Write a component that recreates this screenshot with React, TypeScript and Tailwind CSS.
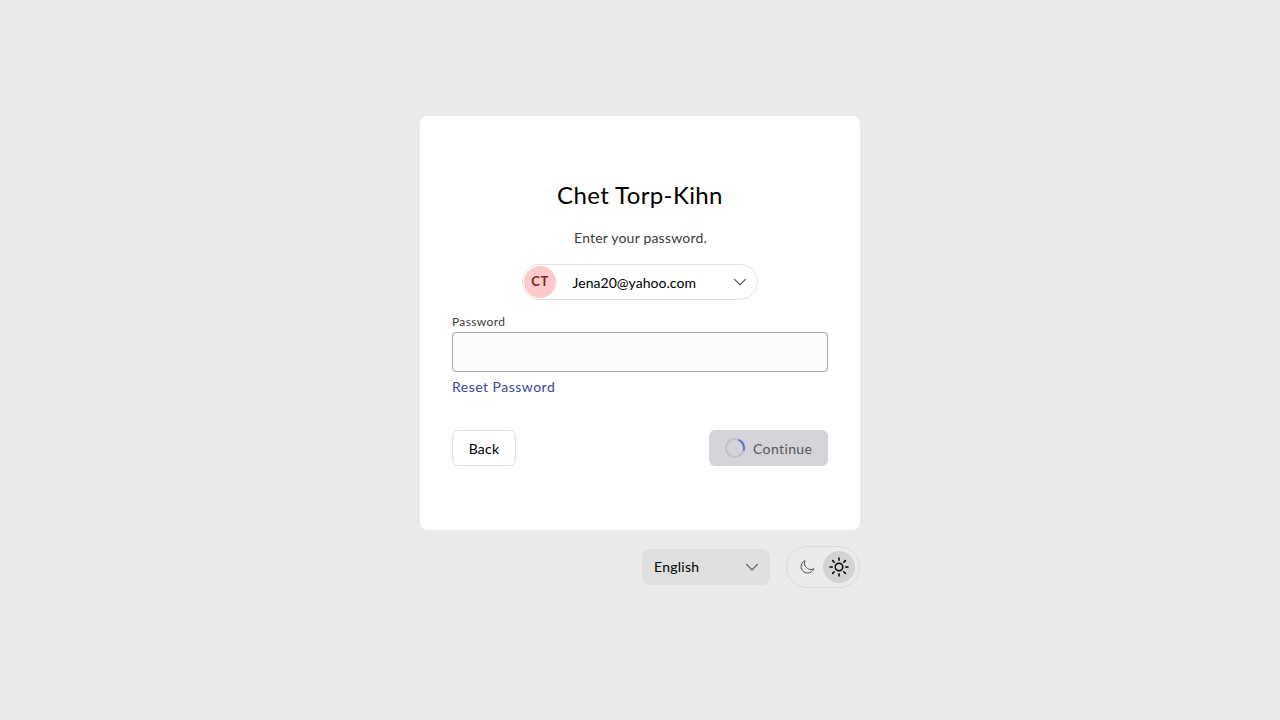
function Spinner() {
  return (
    <svg className="size-5" viewBox="0 0 20 20" fill="none" strokeWidth="2">
      <circle cx="10" cy="10" r="9" stroke="#c0c0c4" />
      <path d="M13.6 1.75A9 9 0 0 1 18.6 12.6" stroke="#5b6fd6" />
    </svg>
  );
}

function ChevronDown() {
  return (
    <svg
      className="size-4 text-[#505050]"
      viewBox="0 0 24 24"
      fill="none"
      stroke="currentColor"
      strokeWidth="1.75"
      strokeLinecap="round"
      strokeLinejoin="round"
    >
      <path d="m20.1 8.1-8.1 8.1-8.1-8.1" />
    </svg>
  );
}

function MoonIcon() {
  return (
    <svg
      className="size-4 text-[#505050]"
      viewBox="0 0 24 24"
      fill="none"
      stroke="currentColor"
      strokeWidth="1.5"
      strokeLinecap="round"
      strokeLinejoin="round"
    >
      <path d="M21.752 15.002A9.72 9.72 0 0 1 18 15.75c-5.385 0-9.75-4.365-9.75-9.75 0-1.33.266-2.597.748-3.752A9.753 9.753 0 0 0 3 11.25C3 16.635 7.365 21 12.75 21a9.753 9.753 0 0 0 9.002-5.998Z" />
    </svg>
  );
}

function SunIcon() {
  return (
    <svg className="size-6 text-black" viewBox="0 0 24 24" fill="none" stroke="currentColor" strokeWidth="1.5" strokeLinecap="round">
      <circle cx="12" cy="12" r="3.75" />
      <path d="M12 3v2.25M12 18.75V21M3 12h2.25M18.75 12H21M5.64 5.64l1.59 1.59M16.77 16.77l1.59 1.59M5.64 18.36l1.59-1.59M16.77 7.23l1.59-1.59" />
    </svg>
  );
}

function AccountPicker() {
  return (
    <button className="mt-4 flex h-9 w-[236px] items-center self-center rounded-full border border-[#e1e1e1] pl-px pr-[9px]">
      <span className="flex size-8 items-center justify-center rounded-full bg-[#fecaca] pb-0.5 text-[13px] font-bold tracking-[0.5px] text-[#7f1d1d]">
        CT
      </span>
      <span className="ml-[16.5px] pt-px tracking-[0.04px] text-black">Jena20@yahoo.com</span>
      <span className="ml-auto pb-px">
        <ChevronDown />
      </span>
    </button>
  );
}

export default function App() {
  return (
    <main className="flex min-h-screen flex-col items-center bg-[#ebebeb] pt-[116px] font-['Lato',sans-serif] text-sm leading-5 tracking-[0.25px]">
      <section className="flex h-[414px] w-[440px] flex-col rounded-lg bg-white px-8 pt-[63px]">
        <h1 className="text-center text-2xl leading-8 tracking-[0.38px] text-black">Chet Torp-Kihn</h1>
        <p className="mt-[17px] pl-px text-center tracking-[0.2px] text-[#3b3b3b]">Enter your password.</p>
        <AccountPicker />
        <label className="mt-[14px] text-xs leading-4 tracking-[0.36px] text-[#3b3b3b]" htmlFor="password">
          Password
        </label>
        <input
          id="password"
          type="password"
          className="mt-0.5 h-10 rounded border border-[#a8a8a8] bg-[#fbfbfb] px-3 outline-none"
        />
        <a className="mt-[5px] self-start tracking-[0.48px] text-[#3b4797]" href="#reset">
          Reset Password
        </a>
        <div className="mt-[33px] flex justify-between">
          <button className="h-9 w-16 rounded-md border border-[#e1e1e1] pt-0.5 text-black">Back</button>
          <button className="flex h-9 w-[119px] items-center gap-2 rounded-md bg-[#d4d3d8] pl-4 text-[#57565c]" disabled>
            <Spinner />
            <span className="pt-0.5 tracking-[0.38px]">Continue</span>
          </button>
        </div>
      </section>
      <footer className="mt-4 flex w-[440px] items-center justify-end gap-4">
        <button className="flex h-9 w-32 items-center justify-between rounded-lg bg-[#dfdfdf] pl-3 pr-[10px] text-black">
          English
          <ChevronDown />
        </button>
        <div className="flex h-[42px] w-[74px] items-center rounded-full border border-[#dadada] p-1">
          <span className="flex size-8 items-center justify-center">
            <MoonIcon />
          </span>
          <span className="flex size-8 items-center justify-center rounded-full bg-[#d3d3d3]">
            <SunIcon />
          </span>
        </div>
      </footer>
    </main>
  );
}
